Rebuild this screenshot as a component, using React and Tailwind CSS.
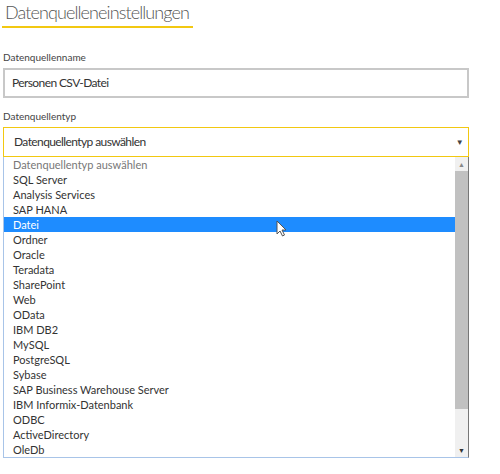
import React from "react";

const options = [
  "SQL Server",
  "Analysis Services",
  "SAP HANA",
  "Datei",
  "Ordner",
  "Oracle",
  "Teradata",
  "SharePoint",
  "Web",
  "OData",
  "IBM DB2",
  "MySQL",
  "PostgreSQL",
  "Sybase",
  "SAP Business Warehouse Server",
  "IBM Informix-Datenbank",
  "ODBC",
  "ActiveDirectory",
  "OleDb",
];

function Cursor() {
  return (
    <svg width="12" height="18" viewBox="0 0 12 18" className="absolute left-[272px] top-[3px]">
      <path d="M1 1 L1 14 L4 11 L6.5 16 L8.5 15 L6 10 L10 10 Z" fill="#fff" stroke="#555" strokeWidth="1" />
    </svg>
  );
}

export default function App() {
  return (
    <div className="w-[500px] h-[474px] bg-white overflow-hidden text-[#333]" style={{ fontFamily: 'Lato, "Open Sans", sans-serif' }}>
      <div className="pl-[2px] pt-[1px]">
        <div className="inline-block pr-[4px] border-b-2 border-[#f2c811] pb-[2px]">
          <h1 className="text-[18px] font-light text-[#555] pl-[3px] leading-[23px] tracking-[-0.9px]">Datenquelleneinstellungen</h1>
        </div>
      </div>

      <div className="pl-[3px] w-[469px]">
        <div className="text-[10px] text-[#444] mt-[23px] leading-[12px]">Datenquellenname</div>
        <div className="mt-[5px] h-[30px] border-2 border-[#c8c8c8] flex items-center pl-[7px] text-[12px] tracking-[-0.6px] text-[#333]">
          Personen CSV-Datei
        </div>

        <div className="text-[10px] text-[#444] mt-[12px] leading-[12px]">Datenquellentyp</div>
        <div className="mt-[5px] h-[30px] border border-[#f2c811] flex items-center justify-between pl-[10px] pr-[5px] text-[12px] tracking-[-0.6px] text-[#333]">
          <span>Datenquellentyp auswählen</span>
          <span className="text-[8px] text-[#444]">▼</span>
        </div>

        <div className="relative flex h-[301px] border-l border-b border-[#a8c4e8] border-r border-r-[#777]">
          <div className="flex-1 text-[11px] leading-[15px]">
            <div className="h-[15px] pl-[9px] text-[#777]">Datenquellentyp auswählen</div>
            {options.map((o) => (
              <div
                key={o}
                className={
                  o === "Datei"
                    ? "relative h-[15px] pl-[9px] bg-[#1e8cff] text-white"
                    : "h-[15px] pl-[9px]"
                }
              >
                {o}
                {o === "Datei" && <Cursor />}
              </div>
            ))}
          </div>
          <div className="w-[13px] bg-[#f0f0f0] flex flex-col items-center">
            <div className="h-[14px] flex items-center justify-center text-[7px] text-[#888]">▲</div>
            <div className="w-[13px] h-[238px] bg-[#c1c1c1]" />
            <div className="flex-1" />
            <div className="h-[14px] flex items-center justify-center text-[7px] text-[#333]">▼</div>
          </div>
        </div>
      </div>
    </div>
  );
}
